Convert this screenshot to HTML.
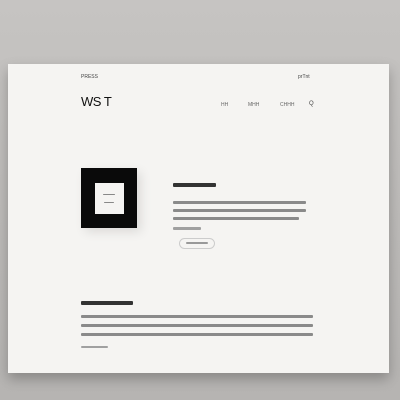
<!DOCTYPE html>
<html><head><style>
html,body{margin:0;padding:0;width:400px;height:400px;overflow:hidden;background:linear-gradient(#c6c4c2,#bcbab8 60%,#b6b4b2);font-family:"Liberation Sans",sans-serif;}
.card{position:absolute;left:8px;top:64px;width:381px;height:309px;background:#f5f4f2;box-shadow:0 6px 12px rgba(0,0,0,0.25);}
.t{position:absolute;color:#333;white-space:nowrap;}
.bar{position:absolute;height:3px;background:#6a6a6a;border-radius:1px;}
</style></head><body>
<div class="card"></div>
<div class="t" style="left:81px;top:74px;font-size:5px;color:#444">PRESS</div>
<div class="t" style="left:298px;top:74px;font-size:5px;color:#444">prTnt</div>
<div class="t" style="left:81px;top:94px;font-size:13px;color:#111;letter-spacing:-0.5px">WS T</div>
<div class="t" style="left:221px;top:102px;font-size:5px;color:#666">HH</div>
<div class="t" style="left:248px;top:102px;font-size:5px;color:#666">MHH</div>
<div class="t" style="left:280px;top:102px;font-size:5px;color:#666">CHHH</div>
<div class="t" style="left:309px;top:101px;font-size:6px;color:#444">Q</div>
<div style="position:absolute;left:81px;top:168px;width:56px;height:60px;background:#0a0a0a;box-shadow:4px 4px 10px rgba(0,0,0,0.1)"></div>
<div style="position:absolute;left:95px;top:183px;width:29px;height:31px;background:#f5f4f2"></div>
<div class="bar" style="left:103px;top:194px;width:12px;height:1px;background:#888"></div>
<div class="bar" style="left:104px;top:202px;width:10px;height:1px;background:#888"></div>
<div class="bar" style="left:173px;top:183px;width:43px;height:4px;background:#333"></div>
<div class="bar" style="left:173px;top:201px;width:133px;background:#8a8a8a"></div>
<div class="bar" style="left:173px;top:209px;width:133px;background:#8a8a8a"></div>
<div class="bar" style="left:173px;top:217px;width:126px;background:#8a8a8a"></div>
<div class="bar" style="left:173px;top:227px;width:28px;background:#a0a0a0"></div>
<div style="position:absolute;left:179px;top:238px;width:34px;height:9px;border:1px solid #ccc;border-radius:6px;"></div>
<div class="bar" style="left:186px;top:242px;width:22px;height:2px;background:#999"></div>
<div class="bar" style="left:81px;top:301px;width:52px;height:4px;background:#333"></div>
<div class="bar" style="left:81px;top:315px;width:232px;background:#8a8a8a"></div>
<div class="bar" style="left:81px;top:324px;width:232px;background:#8a8a8a"></div>
<div class="bar" style="left:81px;top:333px;width:232px;background:#8a8a8a"></div>
<div class="bar" style="left:81px;top:346px;width:27px;height:2px;background:#a0a0a0"></div>
</body></html>
